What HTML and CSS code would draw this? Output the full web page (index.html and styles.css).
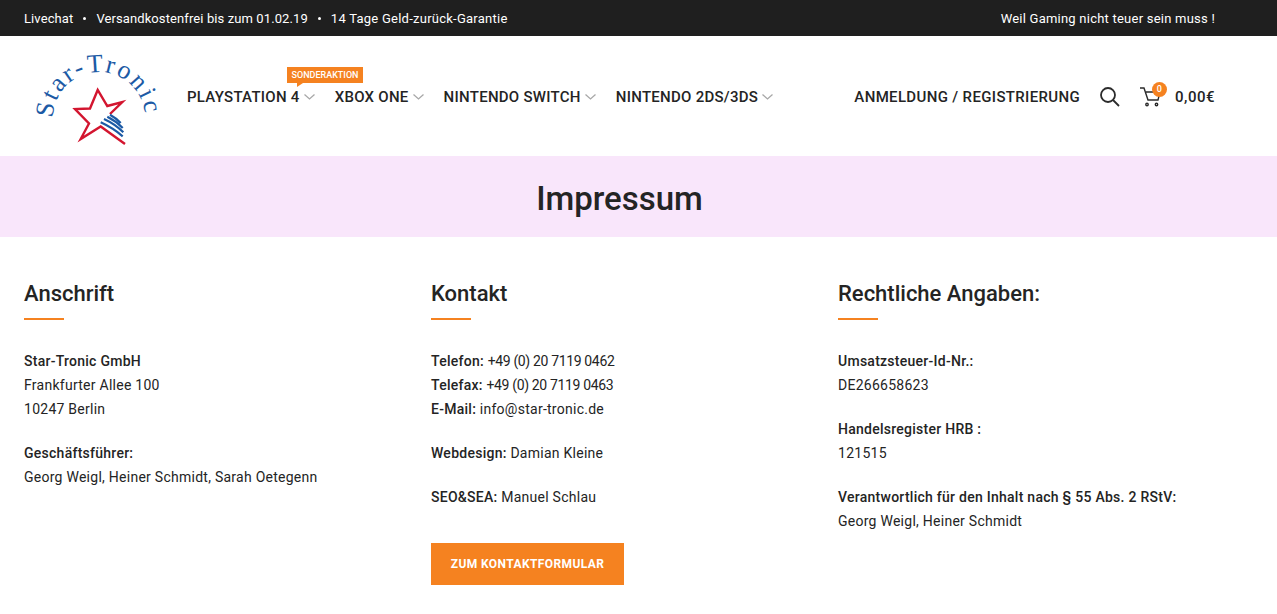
FILE: index.html
```html
<!DOCTYPE html>
<html lang="de">

<head>
  <meta charset="UTF-8">
  <meta name="viewport" content="width=device-width, initial-scale=1.0">
  <title>Impressum</title>
  <link rel="stylesheet" href="styles.css">
</head>

<body>
  <div class="topbar">
    <ul class="top-links">
      <li>Livechat</li>
      <li class="dot"></li>
      <li>Versandkostenfrei bis zum 01.02.19</li>
      <li class="dot"></li>
      <li>14 Tage Geld-zurück-Garantie</li>
    </ul>
    <span class="claim">Weil Gaming nicht teuer sein muss !</span>
  </div>

  <header class="header">
    <a class="logo" href="#">
      <svg width="130" height="96" viewBox="0 0 130 96">
        <defs>
          <path id="arc" d="M21 69 A46 46 0 0 1 113 69 A46 46 0 0 1 103 98"></path>
        </defs>
        <text class="logo-text"><textPath href="#arc">Star-Tronic</textPath></text>
        <path d="M78 65 L90.300 53 L75.300 57 L65.700 41 L58 59.500 L43 60 L57 74.500 L48.700 90 L68.700 77.500 L93 95" fill="none" stroke="#d3152f" stroke-width="2.400"></path>
        <path d="M78 65.700 Q84 69 88.700 74 M75.300 67.700 Q84 72 90.700 79 M72 70 Q83 75 91.300 83.300 M68.700 73.300 Q81 79 90.700 87.300" fill="none" stroke="#1c5aa5" stroke-width="2.200"></path>
      </svg>
    </a>
    <nav class="nav">
      <a href="#">PLAYSTATION 4<span class="label">SONDERAKTION</span><svg class="chev" width="11" height="6" viewBox="0 0 11 6"><path d="M.5.5 5.500 5 10.500.5"></path></svg></a>
      <a href="#">XBOX ONE<svg class="chev" width="11" height="6" viewBox="0 0 11 6"><path d="M.5.5 5.500 5 10.500.5"></path></svg></a>
      <a href="#">NINTENDO SWITCH<svg class="chev" width="11" height="6" viewBox="0 0 11 6"><path d="M.5.5 5.500 5 10.500.5"></path></svg></a>
      <a href="#">NINTENDO 2DS/3DS<svg class="chev" width="11" height="6" viewBox="0 0 11 6"><path d="M.5.5 5.500 5 10.500.5"></path></svg></a>
    </nav>
    <div class="tools">
      <a href="#">ANMELDUNG / REGISTRIERUNG</a>
      <svg class="search" width="20" height="20" viewBox="0 0 20 20"><circle cx="8" cy="8" r="7"></circle><path d="M13 13 19 19"></path></svg>
      <div class="cart">
        <svg width="21" height="20" viewBox="0 0 21 20"><path d="M0 1h4l4 12h10l2-8H6"></path><circle cx="7" cy="17.500" r="1.200"></circle><circle cx="16.500" cy="17.500" r="1.200"></circle></svg>
        <span class="count">0</span>
      </div>
      <a href="#" class="sum">0,00€</a>
    </div>
  </header>

  <div class="title-bar">
    <h1>Impressum</h1>
  </div>

  <main class="columns">
    <section>
      <h2>Anschrift</h2>
      <p><b>Star-Tronic GmbH</b><br>Frankfurter Allee 100<br>10247 Berlin</p>
      <p><b>Geschäftsführer:</b><br>Georg Weigl, Heiner Schmidt, Sarah Oetegenn</p>
    </section>
    <section>
      <h2>Kontakt</h2>
      <p><b>Telefon:</b> <span class="tel">+49 (0) 20 7119 0462</span><br><b>Telefax:</b> <span class="tel">+49 (0) 20 7119 0463</span><br><b>E-Mail:</b> info@star-tronic.de</p>
      <p><b>Webdesign:</b> Damian Kleine</p>
      <p><b>SEO&amp;SEA:</b> Manuel Schlau</p>
      <a href="#" class="btn">ZUM KONTAKTFORMULAR</a>
    </section>
    <section>
      <h2>Rechtliche Angaben:</h2>
      <p><b>Umsatzsteuer-Id-Nr.:</b><br>DE266658623</p>
      <p><b>Handelsregister HRB :</b><br>121515</p>
      <p><b>Verantwortlich für den Inhalt nach § 55 Abs. 2 RStV:</b><br>Georg Weigl, Heiner Schmidt</p>
    </section>
  </main>
</body>

</html>
```

FILE: styles.css
```css
* {
  box-sizing: border-box;
}

body {
  margin: 0;
  background: #fff;
  color: #242424;
  font-family: "Roboto", "Liberation Sans", sans-serif;
  font-size: 14px;
  line-height: 24px;
}

a {
  color: inherit;
  text-decoration: none;
}

.topbar {
  display: flex;
  justify-content: space-between;
  align-items: center;
  height: 36px;
  padding: 1px 62px 0 24px;
  color: #fff;
  background: #1f1f1f;
  font-size: 13px;
}

.top-links {
  display: flex;
  align-items: center;
  gap: 10px;
  margin: 0;
  padding: 0;
  list-style: none;
  letter-spacing: .1px;
}

.top-links .dot {
  width: 3px;
  height: 3px;
  background: #fff;
  border-radius: 50%;
}

.top-links li:last-child {
  letter-spacing: .25px;
}

.claim {
  letter-spacing: .23px;
}

.header {
  display: flex;
  align-items: center;
  height: 120px;
  padding: 1px 62px 0 32px;
}

.logo {
  display: block;
  width: 155px;
  height: 96px;
}

.logo svg {
  overflow: visible;
}

.logo-text {
  fill: #1c5aa5;
  font-family: "Liberation Serif", serif;
  font-size: 26px;
  letter-spacing: 2.100px;
}

.nav {
  display: flex;
  gap: 20px;
  font-size: 15px;
  font-weight: 500;
  letter-spacing: .27px;
  white-space: nowrap;
}

.nav a {
  position: relative;
  display: flex;
  align-items: center;
}

.chev {
  margin-left: 4px;
  fill: none;
  stroke: #a8a8a8;
  stroke-width: 1.300;
}

.label {
  position: absolute;
  top: -18px;
  left: 100px;
  width: 76px;
  height: 16px;
  color: #fff;
  background: #f58220;
  font-size: 9px;
  line-height: 16px;
  letter-spacing: 0;
  text-align: center;
}

.label::after {
  content: "";
  position: absolute;
  left: 10px;
  bottom: -4px;
  border-top: 4px solid #f58220;
  border-right: 6px solid transparent;
}

.tools {
  display: flex;
  align-items: center;
  margin-left: auto;
  font-size: 15px;
  font-weight: 500;
  letter-spacing: .35px;
}

.search {
  margin-left: 20px;
  fill: none;
  stroke: #2b2b2b;
  stroke-width: 1.800;
}

.cart {
  position: relative;
  display: flex;
  margin-left: 20px;
}

.cart svg {
  fill: none;
  stroke: #2b2b2b;
  stroke-width: 1.400;
}

.count {
  position: absolute;
  top: -5px;
  right: -6px;
  width: 15px;
  height: 15px;
  color: #fff;
  background: #f58220;
  border-radius: 50%;
  font-size: 9px;
  line-height: 15px;
  text-align: center;
}

.sum {
  margin-left: 14px;
  letter-spacing: .5px;
}

.title-bar {
  height: 81px;
  padding-right: 38px;
  background: #f9e6fb;
  text-align: center;
}

.title-bar h1 {
  margin: 0;
  font-size: 33px;
  font-weight: 500;
  line-height: 85px;
}

.columns {
  display: grid;
  grid-template-columns: repeat(3, 377px);
  gap: 30px;
  padding: 0 24px;
}

.columns h2 {
  position: relative;
  margin: 41px 0 29px;
  padding-bottom: 10px;
  font-size: 22px;
  font-weight: 500;
  line-height: 32px;
}

.columns h2::after {
  content: "";
  position: absolute;
  left: 0;
  bottom: 0;
  width: 40px;
  height: 2px;
  background: #f58220;
}

.columns p {
  margin: 0 0 20px;
  letter-spacing: .26px;
}

.columns b {
  font-weight: 500;
}

.tel {
  letter-spacing: -.35px;
}

.btn {
  display: inline-block;
  width: 193px;
  height: 42px;
  margin-top: 14px;
  color: #fff;
  background: #f58220;
  font-size: 12px;
  font-weight: 700;
  letter-spacing: .4px;
  line-height: 42px;
  text-align: center;
}
```
